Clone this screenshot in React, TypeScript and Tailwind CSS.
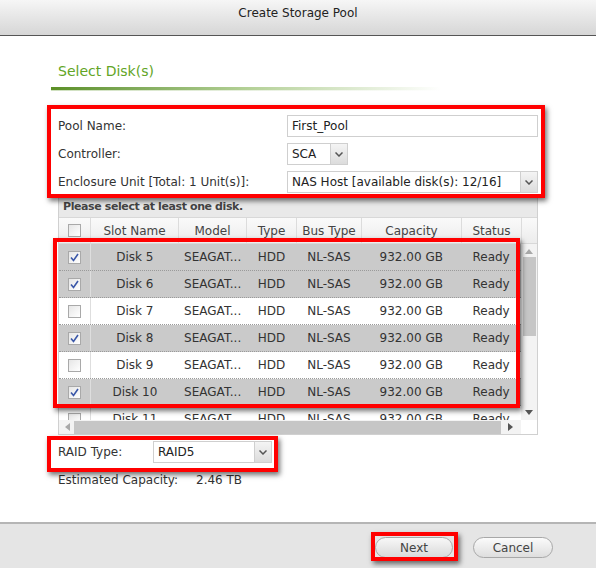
import React from 'react';

const font = { fontFamily: '"DejaVu Sans", Verdana, sans-serif' };

type Disk = { slot: string; checked: boolean };

const disks: Disk[] = [
  { slot: 'Disk 5', checked: true },
  { slot: 'Disk 6', checked: true },
  { slot: 'Disk 7', checked: false },
  { slot: 'Disk 8', checked: true },
  { slot: 'Disk 9', checked: false },
  { slot: 'Disk 10', checked: true },
  { slot: 'Disk 11', checked: false },
];

function Checkbox({ checked }: { checked?: boolean }) {
  return (
    <span className="inline-flex h-[13px] w-[13px] items-center justify-center border border-[#a9a9a9] bg-gradient-to-br from-[#e6e6e6] to-white">
      {checked && (
        <svg width="9" height="9" viewBox="0 0 9 9">
          <path d="M1 4.5 L3.5 7.5 L8 1" fill="none" stroke="#3a57a8" strokeWidth="1.6" />
        </svg>
      )}
    </span>
  );
}

function DropArrow() {
  return (
    <span className="flex h-full w-[17px] items-center justify-center border-l border-[#cfcfcf] bg-gradient-to-b from-[#f4f4f4] to-[#dcdcdc]">
      <svg width="8" height="5" viewBox="0 0 8 5">
        <path d="M0.5 0.5 L4 4 L7.5 0.5" fill="none" stroke="#555" strokeWidth="1.5" />
      </svg>
    </span>
  );
}

function Select({ value, className }: { value: string; className: string }) {
  return (
    <div className={`flex items-center justify-between border border-[#cfcfcf] bg-white ${className}`}>
      <span className="pl-[4px] text-[12px] text-[#222]">{value}</span>
      <DropArrow />
    </div>
  );
}

function RedBox({ className }: { className: string }) {
  return (
    <div
      className={`pointer-events-none absolute border-[4px] border-[#ff0000] shadow-[2px_3px_5px_rgba(0,0,0,0.55)] ${className}`}
    />
  );
}

const cols = ['w-[32px]', 'w-[88px]', 'w-[68px]', 'w-[50px]', 'w-[65px]', 'w-[100px]', 'w-[60px]'];

export default function App() {
  return (
    <div className="relative h-[568px] w-[596px] overflow-hidden bg-white text-[#333]" style={font}>
      {/* title bar */}
      <div className="flex h-[36px] items-start justify-center border-b border-[#555] bg-gradient-to-b from-[#f6f6f6] to-[#d6d6d6] pt-[4px]">
        <span className="text-[12px] text-[#222]">Create Storage Pool</span>
      </div>

      {/* section heading */}
      <div className="ml-[51px] mt-[25px]">
        <div className="pl-[7px] text-[14px] text-[#62a526]">Select Disk(s)</div>
        <div className="mt-[5px] h-[3px] w-[390px] bg-gradient-to-r from-[#5b8f25] via-[#b3d096] to-transparent" />
        <div className="h-px w-[390px] bg-gradient-to-r from-[#cfe0bf] to-transparent" />
      </div>

      {/* form */}
      <div className="ml-[58px] mt-[21px] w-[480px] text-[12px]">
        <div className="flex h-[28px] items-center justify-between">
          <span>Pool Name:</span>
          <div className="flex h-[22px] w-[251px] items-center border border-[#cfcfcf] bg-white pl-[4px] text-[#222]">First_Pool</div>
        </div>
        <div className="flex h-[28px] items-center">
          <span className="w-[229px]">Controller:</span>
          <Select value="SCA" className="h-[22px] w-[61px]" />
        </div>
        <div className="flex h-[28px] items-center">
          <span className="w-[229px]">Enclosure Unit [Total: 1 Unit(s)]:</span>
          <Select value="NAS Host [available disk(s): 12/16]" className="h-[22px] w-[251px]" />
        </div>

        {/* disk grid */}
        <div className="border border-[#d0d0d0]">
          <div className="flex h-[20px] items-center bg-[#e9e9e9] pl-[4px] text-[11px] font-bold tracking-[-0.4px] text-[#444]">
            Please select at least one disk.
          </div>
          <div className="flex h-[27px] border-y border-[#d8d8d8] bg-gradient-to-b from-[#fafafa] to-[#ececec] text-[#444]">
            {['', 'Slot Name', 'Model', 'Type', 'Bus Type', 'Capacity', 'Status'].map((h, i) => (
              <div key={i} className={`flex items-center justify-center border-r border-[#dcdcdc] ${cols[i]}`}>
                {i === 0 ? <Checkbox /> : h}
              </div>
            ))}
          </div>
          <div className="flex h-[176px]">
            <div className="w-[463px] overflow-hidden">
              {disks.map((d) => (
                <div
                  key={d.slot}
                  className={`flex h-[27px] shrink-0 border-b border-dotted border-[#9a9a9a] ${d.checked ? 'bg-[#cacaca]' : 'bg-white'}`}
                >
                  <div className={`flex items-center justify-center border-r border-[#dedede] ${cols[0]}`}>
                    <Checkbox checked={d.checked} />
                  </div>
                  <div className={`flex items-center justify-center ${cols[1]}`}>{d.slot}</div>
                  <div className={`flex items-center justify-center ${cols[2]}`}>SEAGAT...</div>
                  <div className={`flex items-center justify-center ${cols[3]}`}>HDD</div>
                  <div className={`flex items-center justify-center ${cols[4]}`}>NL-SAS</div>
                  <div className={`flex items-center justify-center ${cols[5]}`}>932.00 GB</div>
                  <div className={`flex items-center justify-center ${cols[6]}`}>Ready</div>
                </div>
              ))}
            </div>
            {/* vertical scrollbar */}
            <div className="flex w-[16px] flex-col items-center bg-[#f3f3f3] pt-[5px]">
              <svg width="8" height="5" viewBox="0 0 8 5"><path d="M0 5 L4 0 L8 5 Z" fill="#a8a8a8" /></svg>
              <div className="mt-[3px] h-[79px] w-[13px] bg-[#c6c6c6]" />
              <div className="flex-1" />
              <svg width="8" height="5" viewBox="0 0 8 5" className="mb-[5px]"><path d="M0 0 L8 0 L4 5 Z" fill="#555" /></svg>
            </div>
          </div>
          {/* horizontal scrollbar */}
          <div className="flex h-[14px] items-center">
            <div className="flex h-full w-[463px] items-center bg-[#f3f3f3] px-[6px]">
              <svg width="5" height="8" viewBox="0 0 5 8"><path d="M5 0 L0 4 L5 8 Z" fill="#a8a8a8" /></svg>
              <div className="ml-[4px] h-[13px] w-[427px] bg-[#c6c6c6]" />
              <svg width="5" height="8" viewBox="0 0 5 8" className="ml-[7px]"><path d="M0 0 L5 4 L0 8 Z" fill="#555" /></svg>
            </div>
            <div className="h-full w-[16px] bg-white" />
          </div>
        </div>

        {/* raid */}
        <div className="mt-[6px] flex h-[22px] items-center">
          <span className="w-[95px]">RAID Type:</span>
          <Select value="RAID5" className="h-[22px] w-[119px]" />
        </div>
        <div className="mt-[8px] flex items-center">
          <span className="w-[138px]">Estimated Capacity:</span>
          <span>2.46 TB</span>
        </div>
      </div>

      {/* footer */}
      <div className="absolute bottom-0 left-0 flex h-[46px] w-full items-start justify-end gap-[20px] border-t-2 border-[#b5b5b5] bg-[#e5e5e5] pr-[43px] pt-[13px] text-[12px]">
        <button className="h-[21px] w-[78px] rounded-full border border-[#a8a8a8] bg-gradient-to-b from-[#f8f8f8] to-[#d9d9d9] text-[#444]">Next</button>
        <button className="h-[21px] w-[80px] rounded-full border border-[#a8a8a8] bg-gradient-to-b from-[#fbfbfb] to-[#dedede] text-[#444]">Cancel</button>
      </div>

      {/* annotation boxes */}
      <RedBox className="left-[47px] top-[105px] h-[93px] w-[498px]" />
      <RedBox className="left-[53px] top-[238px] h-[170px] w-[467px]" />
      <RedBox className="left-[47px] top-[436px] h-[36px] w-[231px]" />
      <RedBox className="left-[371px] top-[532px] h-[29px] w-[87px]" />
    </div>
  );
}
